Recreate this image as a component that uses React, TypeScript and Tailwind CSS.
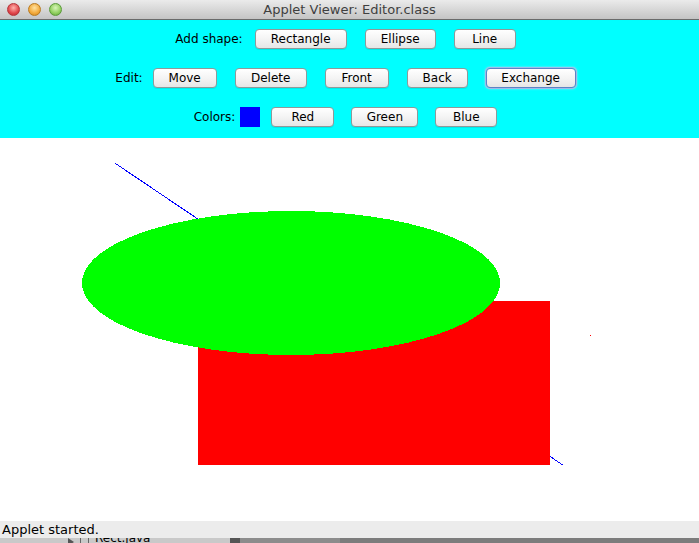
import React from "react";

const font = { fontFamily: '"DejaVu Sans", "Liberation Sans", sans-serif' };

function Btn({ label, w, focus }: { label: string; w: number; focus?: boolean }) {
  return (
    <div
      className={
        "flex h-[20px] items-center justify-center rounded-[4px] border bg-gradient-to-b from-[#ffffff] via-[#f4f4f4] to-[#e6e6e6] text-[12px] leading-none text-black " +
        (focus
          ? "border-[#5f82c4] shadow-[0_0_0_1px_#9fbbe8,0_0_2px_1px_#c3d5f3]"
          : "border-[#8e9a9a] shadow-[0_1px_0_rgba(0,0,0,0.08)]")
      }
      style={{ width: w }}
    >
      {label}
    </div>
  );
}

export default function App() {
  return (
    <div className="h-[543px] w-[699px] overflow-hidden bg-white" style={font}>
      {/* title bar */}
      <div className="relative flex h-[20px] items-center justify-center border-b border-[#6a6a6a] bg-gradient-to-b from-[#ebebeb] to-[#c4c4c4]">
        <div className="absolute left-[7px] top-[3px] flex gap-[8px]">
          <div className="h-[13px] w-[13px] rounded-full border border-[#b5353a] bg-[radial-gradient(circle_at_50%_35%,#ffb3ad,#e0454a_60%,#b22a2e)]" />
          <div className="h-[13px] w-[13px] rounded-full border border-[#b97a1f] bg-[radial-gradient(circle_at_50%_35%,#ffe2a0,#f2a93a_60%,#c8811f)]" />
          <div className="h-[13px] w-[13px] rounded-full border border-[#5a9a3a] bg-[radial-gradient(circle_at_50%_35%,#d8f5b8,#8fcf5e_60%,#5c9b36)]" />
        </div>
        <span className="text-[13px] text-[#3f3f3f]">Applet Viewer: Editor.class</span>
      </div>

      {/* control panel */}
      <div className="flex h-[118px] flex-col bg-[#00ffff] pr-[8px] pt-[9px]">
        <div className="flex h-[20px] items-center justify-center">
          <span className="text-[12px] text-black">Add shape:</span>
          <div className="ml-[12px] flex gap-[18px]">
            <Btn label="Rectangle" w={92} />
            <Btn label="Ellipse" w={71} />
            <Btn label="Line" w={62} />
          </div>
        </div>
        <div className="mt-[19px] flex h-[20px] items-center justify-center">
          <span className="text-[12px] text-black">Edit:</span>
          <div className="ml-[10px] flex gap-[18px]">
            <Btn label="Move" w={64} />
            <Btn label="Delete" w={72} />
            <Btn label="Front" w={64} />
            <Btn label="Back" w={61} />
            <Btn label="Exchange" w={90} focus />
          </div>
        </div>
        <div className="mt-[19px] flex h-[20px] items-center justify-center">
          <span className="text-[12px] text-black">Colors:</span>
          <div className="ml-[5px] h-[20px] w-[20px] bg-[#0000ff]" />
          <div className="ml-[11px] flex gap-[17px]">
            <Btn label="Red" w={63} />
            <Btn label="Green" w={67} />
            <Btn label="Blue" w={62} />
          </div>
        </div>
      </div>

      {/* canvas */}
      <div className="h-[383px] w-full bg-white">
        <svg width="699" height="383" shapeRendering="crispEdges">
          <line x1="115.5" y1="25.5" x2="563.5" y2="327.5" stroke="#0000ff" strokeWidth="1" />
          <rect x="198" y="163" width="352" height="164" fill="#ff0000" />
          <ellipse cx="291" cy="145" rx="209" ry="72" fill="#00ff00" />
          <rect x="590" y="197" width="1" height="1" fill="#ff0000" />
        </svg>
      </div>

      {/* status bar */}
      <div className="flex h-[17px] items-center bg-[#ececec] pl-[2px]">
        <span className="text-[13px] leading-none text-black">Applet started.</span>
      </div>

      {/* bottom strip of underlying window */}
      <div className="relative flex h-[5px] overflow-hidden bg-[#7c7c7c]">
        <div className="relative h-full w-[230px] bg-[#c9c9c9]">
          <span className="absolute left-[68px] top-[0px] h-0 w-0 border-y-[4px] border-l-[6px] border-y-transparent border-l-[#555]" />
          <span className="absolute left-[80px] top-[-2px] h-[8px] w-[9px] border border-[#666]" />
          <span className="absolute left-[95px] top-[-6px] text-[12px] leading-none text-black">Rect.java</span>
        </div>
        <div className="h-full w-[10px] bg-[#555]" />
        <div className="h-full w-[100px] bg-[#8c8c8c]" />
      </div>
    </div>
  );
}
